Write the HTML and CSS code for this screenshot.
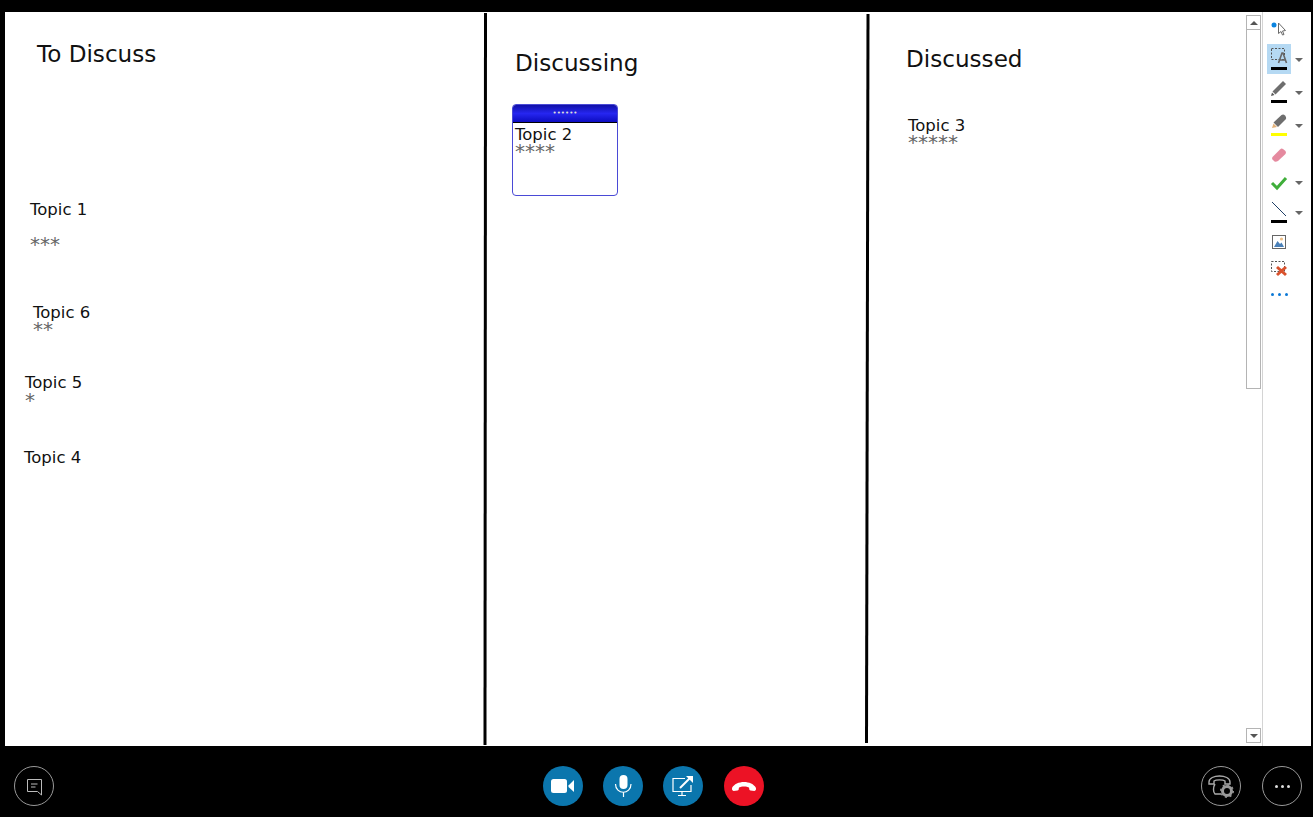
FILE: index.html
```html
<!DOCTYPE html>
<html lang="en">
<head>
    <meta charset="UTF-8">
    <title>Whiteboard</title>
    <link rel="stylesheet" href="styles.css">
</head>
<body>

    <div class="stage">
        <div class="board">
            <!-- canvas coordinates: everything here is placed on the whiteboard by hand -->
            <div class="canvas">
                <svg class="ink" width="1241" height="734" viewBox="0 0 1241 734">
                    <path d="M480.5 1 L480 733" stroke="#000" stroke-width="3" fill="none"/>
                    <path d="M863 2 L861.5 731" stroke="#000" stroke-width="3" fill="none"/>
                </svg>

                <div class="heading h-discuss">To Discuss</div>
                <div class="heading h-discussing">Discussing</div>
                <div class="heading h-discussed">Discussed</div>

                <div class="note n1">Topic 1</div>
                <div class="stars s1">***</div>
                <div class="note n6">Topic 6</div>
                <div class="stars s6">**</div>
                <div class="note n5">Topic 5</div>
                <div class="stars s5">*</div>
                <div class="note n4">Topic 4</div>
                <div class="note n3">Topic 3</div>
                <div class="stars s3">*****</div>

                <div class="sticky">
                    <div class="sticky-bar">••••••</div>
                    <div class="sticky-body">
                        <div class="sticky-title">Topic 2</div>
                        <div class="sticky-stars">****</div>
                    </div>
                </div>
            </div>

            <div class="scrollbar">
                <div class="scroll-btn"><span class="arrow-up"></span></div>
                <div class="scroll-thumb"></div>
                <div class="scroll-track"></div>
                <div class="scroll-btn"><span class="arrow-down"></span></div>
            </div>

            <div class="toolbar">
                <div class="tool t-pointer">
                    <svg width="18" height="18" viewBox="0 0 18 18">
                        <circle cx="4" cy="6" r="2.5" fill="#0a84e0"/>
                        <path d="M8.5 4 L8.5 14.5 L11 12.5 L12.5 16 L14 15.5 L12.5 12 L15.5 11.5 Z" fill="#fff" stroke="#6a6a6a" stroke-width="1"/>
                    </svg>
                </div>
                <div class="tool t-text">
                    <div class="tool-box">
                        <svg width="18" height="22" viewBox="0 0 18 22">
                            <rect x="1.5" y="0.5" width="13" height="11" fill="none" stroke="#555" stroke-dasharray="2 1.5"/>
                            <path d="M8.5 15 L12 5 L13 5 L16.5 15 M10 12 H15" fill="none" stroke="#666" stroke-width="1.6"/>
                            <rect x="1" y="19" width="16" height="3" fill="#000"/>
                        </svg>
                    </div>
                    <span class="caret"></span>
                </div>
                <div class="tool t-pen">
                    <svg width="18" height="24" viewBox="0 0 18 24">
                        <path d="M1 17 L2 13.5 L4.5 16 Z" fill="#555"/>
                        <path d="M2.5 12.5 L13 2 L16 5 L5.5 15.5 Z" fill="#6e6e6e"/>
                        <rect x="1" y="21" width="16" height="3" fill="#000"/>
                    </svg>
                    <span class="caret"></span>
                </div>
                <div class="tool t-marker">
                    <svg width="18" height="24" viewBox="0 0 18 24">
                        <path d="M2 16 L3.5 11.5 L7 15 Z" fill="#e3b27a"/>
                        <path d="M3.5 10.5 L11.5 3 Q13.5 2 15 3.5 L16 5 Q16.5 6.5 15.5 7.5 L8 15 Z" fill="#6e6e6e"/>
                        <rect x="1" y="21" width="16" height="3" fill="#ffff00"/>
                    </svg>
                    <span class="caret"></span>
                </div>
                <div class="tool t-eraser">
                    <svg width="18" height="16" viewBox="0 0 18 16">
                        <path d="M2.5 10 L10 2.5 Q11.5 1 13 2 L15.5 4 Q16.5 5.5 15.5 7 L8 14 Q6 15 4.5 14.5 L2.5 12.5 Q1.5 11 2.5 10 Z" fill="#e58a9f"/>
                    </svg>
                </div>
                <div class="tool t-check">
                    <svg width="18" height="16" viewBox="0 0 18 16">
                        <path d="M2 8 L7 13 L16 3" fill="none" stroke="#3fae3a" stroke-width="3"/>
                    </svg>
                    <span class="caret"></span>
                </div>
                <div class="tool t-line">
                    <svg width="18" height="24" viewBox="0 0 18 24">
                        <path d="M2 2 L16 16" stroke="#1f3f66" stroke-width="1"/>
                        <rect x="1" y="20" width="16" height="3" fill="#000"/>
                    </svg>
                    <span class="caret"></span>
                </div>
                <div class="tool t-image">
                    <svg width="18" height="16" viewBox="0 0 18 16">
                        <rect x="2.5" y="1.5" width="13" height="13" fill="#fff" stroke="#666"/>
                        <circle cx="11.5" cy="5" r="1.6" fill="#efc088"/>
                        <path d="M4 13 L7.5 7 L10 10 L11.5 8.5 L14 13 Z" fill="#4a80b8"/>
                    </svg>
                </div>
                <div class="tool t-delete">
                    <svg width="18" height="18" viewBox="0 0 18 18">
                        <rect x="1.5" y="2.5" width="13" height="10" fill="none" stroke="#555" stroke-dasharray="2 1.5"/>
                        <path d="M7 8 L16 16 M16 8 L7 16" stroke="#d9512c" stroke-width="3"/>
                    </svg>
                </div>
                <div class="tool t-more">
                    <span class="dot"></span><span class="dot"></span><span class="dot"></span>
                </div>
            </div>
        </div>
    </div>

    <div class="controls">
        <div class="circle outline">
            <svg width="20" height="20" viewBox="0 0 20 20">
                <path d="M3.5 3.5 H17.5 V19 L13.5 15.5 H3.5 Z" fill="none" stroke="#bbb" stroke-width="1"/>
                <path d="M7 8 H13.5 M7 11 H11.5" stroke="#bbb" stroke-width="1"/>
            </svg>
        </div>

        <div class="call-group">
            <div class="circle blue">
                <svg width="26" height="18" viewBox="0 0 26 18">
                    <rect x="1" y="2" width="16" height="14" rx="2.5" fill="#fff"/>
                    <path d="M18.5 8.5 L24 3 V15 L18.5 10 Z" fill="#fff"/>
                </svg>
            </div>
            <div class="circle blue">
                <svg width="20" height="24" viewBox="0 0 20 24">
                    <rect x="6.5" y="1" width="8" height="14" rx="4" fill="#fff"/>
                    <path d="M2.5 10 C2.5 21 18 21 18 10 M10.5 18 V23" fill="none" stroke="#fff" stroke-width="1.2"/>
                </svg>
            </div>
            <div class="circle blue">
                <svg width="24" height="22" viewBox="0 0 24 22">
                    <path d="M14 3.5 H2 V16.5 H20 V10 M11 21 V17 M7 20.5 H15" fill="none" stroke="#fff" stroke-width="1.2"/>
                    <path d="M9 13 L19 3" stroke="#fff" stroke-width="2"/>
                    <path d="M15 1 H22 V8 Z" fill="#fff"/>
                </svg>
            </div>
            <div class="circle red">
                <svg width="26" height="12" viewBox="0 0 26 12">
                    <path d="M1 8 C5 0 21 0 25 8 Q25.5 10.5 23.5 11 L19.5 10.5 Q18 10 18 7.5 C16 6 10 6 8 7.5 Q8 10 6.5 10.5 L2.5 11 Q0.5 10.5 1 8 Z" fill="#fff"/>
                </svg>
            </div>
        </div>

        <div class="right-group">
            <div class="circle outline">
                <svg width="28" height="26" viewBox="0 0 28 26">
                    <path d="M2 9 C2 1 23 1 23 9 V11 H18 V8 C16 6.5 9 6.5 7 8 V11 H2 Z M8 11 C6 14 6 19 8 21 H14" fill="none" stroke="#aaa" stroke-width="1.4"/>
                    <circle cx="20" cy="18" r="4.5" fill="none" stroke="#999" stroke-width="3"/>
                    <circle cx="20" cy="18" r="6.2" fill="none" stroke="#999" stroke-width="1.6" stroke-dasharray="2 2.8"/>
                </svg>
            </div>
            <div class="circle outline">
                <span class="wdot"></span><span class="wdot"></span><span class="wdot"></span>
            </div>
        </div>
    </div>

</body>
</html>
```

FILE: styles.css
```css
html, body {
    margin: 0;
    height: 100%;
}
body {
    background-color: #000;
    overflow: hidden;
    font-family: "DejaVu Sans", sans-serif;
    color: #111;
}
.stage {
    padding: 12px 2px 0 5px;
}
.board {
    display: flex;
    height: 734px;
    background: #fff;
}
.canvas {
    position: relative;
    flex: 1;
}
.ink {
    position: absolute;
    left: 0;
    top: 0;
}

/* whiteboard text */
.heading {
    position: absolute;
    font-size: 23.1px;
    line-height: 26px;
    white-space: nowrap;
}
.h-discuss { left: 32px; top: 29px; }
.h-discussing { left: 510px; top: 38px; }
.h-discussed { left: 901px; top: 34px; }

.note {
    position: absolute;
    font-size: 16.5px;
    line-height: 18px;
    white-space: nowrap;
}
.stars {
    position: absolute;
    font-size: 20px;
    line-height: 14px;
    color: #666;
    white-space: nowrap;
}
.n1 { left: 25px; top: 189px; }
.s1 { left: 25px; top: 225px; }
.n6 { left: 28px; top: 292px; }
.s6 { left: 28px; top: 310px; }
.n5 { left: 20px; top: 362px; }
.s5 { left: 20px; top: 381px; }
.n4 { left: 19px; top: 437px; }
.n3 { left: 903px; top: 105px; }
.s3 { left: 903px; top: 123px; }

.sticky {
    position: absolute;
    left: 507px;
    top: 92px;
    width: 106px;
    height: 92px;
    box-sizing: border-box;
    border: 1px solid #4a4ad6;
    border-radius: 4px;
    overflow: hidden;
    background: #fff;
}
.sticky-bar {
    height: 18px;
    background: linear-gradient(#1010a8, #2626f0 50%, #0c0cc0);
    border-bottom: 1px solid #000;
    color: #ddd;
    font-size: 7px;
    line-height: 17px;
    text-align: center;
    box-sizing: border-box;
}
.sticky-body {
    padding: 2px 2px 0;
}
.sticky-title {
    font-size: 16.5px;
    line-height: 20px;
}
.sticky-stars {
    font-size: 20px;
    line-height: 12px;
    color: #666;
}

/* scrollbar */
.scrollbar {
    width: 16px;
    display: flex;
    flex-direction: column;
    margin-top: 3px;
    height: 728px;
    box-sizing: border-box;
    padding-right: 1px;
}
.scroll-btn {
    height: 15px;
    flex: none;
    box-sizing: border-box;
    display: flex;
    align-items: center;
    justify-content: center;
    border: 1px solid #b4b4b4;
}
.scroll-thumb {
    height: 359px;
    flex: none;
    box-sizing: border-box;
    border: 1px solid #b4b4b4;
    border-top: 0;
}
.scroll-track {
    flex: 1;
}
.arrow-up, .arrow-down {
    width: 0;
    height: 0;
    border-left: 4px solid transparent;
    border-right: 4px solid transparent;
}
.arrow-up { border-bottom: 4px solid #555; }
.arrow-down { border-top: 4px solid #555; }

/* right hand tools */
.toolbar {
    width: 49px;
    box-sizing: border-box;
    border-left: 1px solid #d4d4d4;
    display: flex;
    flex-direction: column;
}
.tool {
    position: relative;
    display: flex;
    align-items: center;
    padding-left: 7px;
}
.tool svg { display: block; }
.t-pointer { height: 32px; }
.t-text { height: 30px; padding-left: 4px; }
.tool-box {
    width: 24px;
    height: 30px;
    background: #b5d9f3;
    display: flex;
    align-items: center;
    justify-content: center;
}
.t-pen { height: 34px; }
.t-marker { height: 32px; }
.t-eraser { height: 30px; }
.t-check { height: 26px; }
.t-line { height: 32px; }
.t-image { height: 28px; }
.t-delete { height: 24px; }
.t-more { height: 28px; gap: 4px; padding-left: 8px; }
.caret {
    position: absolute;
    left: 32px;
    top: 50%;
    margin-top: -1px;
    border-left: 4px solid transparent;
    border-right: 4px solid transparent;
    border-top: 4px solid #666;
}
.t-pen .caret, .t-marker .caret { margin-top: 0; }
.t-check .caret { margin-top: -2px; }
.dot {
    width: 3px;
    height: 3px;
    border-radius: 50%;
    background: #0a78d6;
}

/* call controls */
.controls {
    display: flex;
    align-items: flex-start;
    height: 71px;
    box-sizing: border-box;
    padding: 20px 11px 0 14px;
}
.circle {
    width: 40px;
    height: 40px;
    border-radius: 50%;
    box-sizing: border-box;
    display: flex;
    align-items: center;
    justify-content: center;
    flex: none;
}
.circle svg { display: block; }
.outline { border: 1px solid #999; gap: 3px; }
.blue { background: #0b76ad; }
.red { background: #ec1225; margin-left: 1px; }
.call-group {
    display: flex;
    gap: 20px;
    margin-left: 489px;
}
.right-group {
    display: flex;
    gap: 21px;
    margin-left: auto;
}
.wdot {
    width: 3px;
    height: 3px;
    border-radius: 50%;
    background: #ddd;
}
```
